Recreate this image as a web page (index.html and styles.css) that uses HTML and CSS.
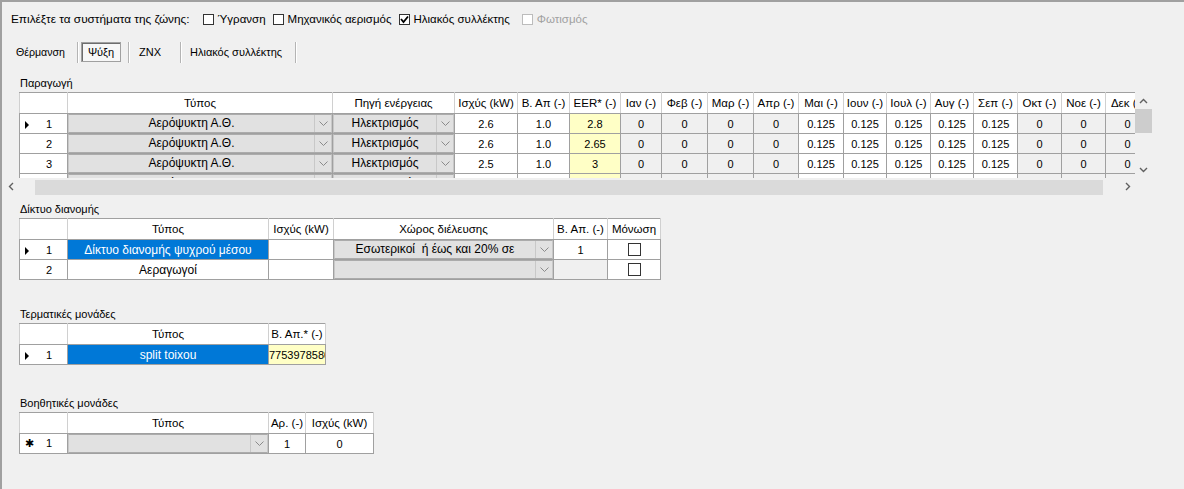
FILE: index.html
```html
<!DOCTYPE html>
<html lang="el">
<head>
    <meta charset="UTF-8">
    <title>Συστήματα ζώνης</title>
    <link rel="stylesheet" href="styles.css">
</head>
<body>
<div class="window">

    <!-- system selection -->
    <div class="systems">
        <span class="prompt">Επιλέξτε τα συστήματα της ζώνης:</span>
        <span class="check"><span class="box"></span>Ύγρανση</span>
        <span class="check"><span class="box"></span>Μηχανικός αερισμός</span>
        <span class="check"><span class="box checked"><svg width="9" height="9" viewBox="0 0 9 9"><polyline points="1,4 3.5,7 8,1.5" fill="none" stroke="#000" stroke-width="1.8"/></svg></span>Ηλιακός συλλέκτης</span>
        <span class="check disabled"><span class="box"></span>Φωτισμός</span>
    </div>

    <!-- tool strip -->
    <div class="tabs">
        <span class="tab tab-heat">Θέρμανση</span>
        <span class="sep"></span>
        <span class="tab tab-cool active">Ψύξη</span>
        <span class="sep"></span>
        <span class="tab tab-znx">ZNX</span>
        <span class="sep"></span>
        <span class="tab tab-solar">Ηλιακός συλλέκτης</span>
        <span class="sep"></span>
    </div>

    <!-- Παραγωγή -->
    <div class="caption cap-prod">Παραγωγή</div>
    <div class="scroll-grid">
        <div class="viewport">
            <table class="grid prod">
                <colgroup>
                    <col><col><col><col><col><col><col><col><col><col><col><col><col><col><col><col><col><col>
                </colgroup>
                <tr class="head">
                    <th></th><th>Τύπος</th><th>Πηγή ενέργειας</th><th>Ισχύς (kW)</th><th>Β. Απ (-)</th><th>EER* (-)</th>
                    <th>Ιαν (-)</th><th>Φεβ (-)</th><th>Μαρ (-)</th><th>Απρ (-)</th><th>Μαι (-)</th><th>Ιουν (-)</th>
                    <th>Ιουλ (-)</th><th>Αυγ (-)</th><th>Σεπ (-)</th><th>Οκτ (-)</th><th>Νοε (-)</th><th>Δεκ (-)</th>
                </tr>
                <tr>
                    <td class="rh"><span class="mark"><span class="current"></span></span>1</td>
                    <td class="combo"><div class="combo-box"><span class="combo-text">Αερόψυκτη Α.Θ.</span><span class="combo-btn"><svg width="9" height="5" viewBox="0 0 9 5"><polyline points="0.5,0.5 4.5,4.5 8.5,0.5" fill="none" stroke="#8a8a8a"/></svg></span></div></td>
                    <td class="combo"><div class="combo-box"><span class="combo-text">Ηλεκτρισμός</span><span class="combo-btn"><svg width="9" height="5" viewBox="0 0 9 5"><polyline points="0.5,0.5 4.5,4.5 8.5,0.5" fill="none" stroke="#8a8a8a"/></svg></span></div></td>
                    <td>2.6</td><td>1.0</td><td class="yellow">2.8</td>
                    <td class="off">0</td><td class="off">0</td><td class="off">0</td><td class="off">0</td>
                    <td>0.125</td><td>0.125</td><td>0.125</td><td>0.125</td><td>0.125</td>
                    <td class="off">0</td><td class="off">0</td><td class="off">0</td>
                </tr>
                <tr>
                    <td class="rh"><span class="mark"></span>2</td>
                    <td class="combo"><div class="combo-box"><span class="combo-text">Αερόψυκτη Α.Θ.</span><span class="combo-btn"><svg width="9" height="5" viewBox="0 0 9 5"><polyline points="0.5,0.5 4.5,4.5 8.5,0.5" fill="none" stroke="#8a8a8a"/></svg></span></div></td>
                    <td class="combo"><div class="combo-box"><span class="combo-text">Ηλεκτρισμός</span><span class="combo-btn"><svg width="9" height="5" viewBox="0 0 9 5"><polyline points="0.5,0.5 4.5,4.5 8.5,0.5" fill="none" stroke="#8a8a8a"/></svg></span></div></td>
                    <td>2.6</td><td>1.0</td><td class="yellow">2.65</td>
                    <td class="off">0</td><td class="off">0</td><td class="off">0</td><td class="off">0</td>
                    <td>0.125</td><td>0.125</td><td>0.125</td><td>0.125</td><td>0.125</td>
                    <td class="off">0</td><td class="off">0</td><td class="off">0</td>
                </tr>
                <tr>
                    <td class="rh"><span class="mark"></span>3</td>
                    <td class="combo"><div class="combo-box"><span class="combo-text">Αερόψυκτη Α.Θ.</span><span class="combo-btn"><svg width="9" height="5" viewBox="0 0 9 5"><polyline points="0.5,0.5 4.5,4.5 8.5,0.5" fill="none" stroke="#8a8a8a"/></svg></span></div></td>
                    <td class="combo"><div class="combo-box"><span class="combo-text">Ηλεκτρισμός</span><span class="combo-btn"><svg width="9" height="5" viewBox="0 0 9 5"><polyline points="0.5,0.5 4.5,4.5 8.5,0.5" fill="none" stroke="#8a8a8a"/></svg></span></div></td>
                    <td>2.5</td><td>1.0</td><td class="yellow">3</td>
                    <td class="off">0</td><td class="off">0</td><td class="off">0</td><td class="off">0</td>
                    <td>0.125</td><td>0.125</td><td>0.125</td><td>0.125</td><td>0.125</td>
                    <td class="off">0</td><td class="off">0</td><td class="off">0</td>
                </tr>
                <tr>
                    <td class="rh"><span class="mark"></span>4</td>
                    <td class="combo"><div class="combo-box"><span class="combo-text">Αερόψυκτη Α.Θ.</span><span class="combo-btn"><svg width="9" height="5" viewBox="0 0 9 5"><polyline points="0.5,0.5 4.5,4.5 8.5,0.5" fill="none" stroke="#8a8a8a"/></svg></span></div></td>
                    <td class="combo"><div class="combo-box"><span class="combo-text">Ηλεκτρισμός</span><span class="combo-btn"><svg width="9" height="5" viewBox="0 0 9 5"><polyline points="0.5,0.5 4.5,4.5 8.5,0.5" fill="none" stroke="#8a8a8a"/></svg></span></div></td>
                    <td>2.5</td><td>1.0</td><td class="yellow">3</td>
                    <td class="off">0</td><td class="off">0</td><td class="off">0</td><td class="off">0</td>
                    <td>0.125</td><td>0.125</td><td>0.125</td><td>0.125</td><td>0.125</td>
                    <td class="off">0</td><td class="off">0</td><td class="off">0</td>
                </tr>
            </table>
        </div>
        <div class="vscroll">
            <span class="arrow"><svg width="9" height="6" viewBox="0 0 9 6"><polyline points="1,5 4.5,1.5 8,5" fill="none" stroke="#606060" stroke-width="1.4"/></svg></span>
            <span class="vthumb"></span>
            <span class="vtrack"></span>
            <span class="arrow"><svg width="9" height="6" viewBox="0 0 9 6"><polyline points="1,1 4.5,4.5 8,1" fill="none" stroke="#606060" stroke-width="1.4"/></svg></span>
        </div>
    </div>
    <div class="hscroll">
        <span class="arrow"><svg width="6" height="9" viewBox="0 0 6 9"><polyline points="5,1 1.5,4.5 5,8" fill="none" stroke="#606060" stroke-width="1.4"/></svg></span>
        <span class="hthumb"></span>
        <span class="arrow"><svg width="6" height="9" viewBox="0 0 6 9"><polyline points="1,1 4.5,4.5 1,8" fill="none" stroke="#606060" stroke-width="1.4"/></svg></span>
    </div>

    <!-- Δίκτυο διανομής -->
    <div class="caption cap-dist">Δίκτυο διανομής</div>
    <table class="grid dist">
        <colgroup><col><col><col><col><col><col></colgroup>
        <tr class="head">
            <th></th><th>Τύπος</th><th>Ισχύς (kW)</th><th>Χώρος διέλευσης</th><th>Β. Απ. (-)</th><th>Μόνωση</th>
        </tr>
        <tr>
            <td class="rh"><span class="mark"><span class="current"></span></span>1</td>
            <td class="selected">Δίκτυο διανομής ψυχρού μέσου</td>
            <td></td>
            <td class="combo"><div class="combo-box"><span class="combo-text">Εσωτερικοί &nbsp;ή έως και 20% σε</span><span class="combo-btn"><svg width="9" height="5" viewBox="0 0 9 5"><polyline points="0.5,0.5 4.5,4.5 8.5,0.5" fill="none" stroke="#8a8a8a"/></svg></span></div></td>
            <td>1</td>
            <td><span class="cell-check"></span></td>
        </tr>
        <tr>
            <td class="rh"><span class="mark"></span>2</td>
            <td class="text">Αεραγωγοί</td>
            <td></td>
            <td class="combo"><div class="combo-box"><span class="combo-text"></span><span class="combo-btn"><svg width="9" height="5" viewBox="0 0 9 5"><polyline points="0.5,0.5 4.5,4.5 8.5,0.5" fill="none" stroke="#8a8a8a"/></svg></span></div></td>
            <td class="off"></td>
            <td><span class="cell-check"></span></td>
        </tr>
    </table>

    <!-- Τερματικές μονάδες -->
    <div class="caption cap-term">Τερματικές μονάδες</div>
    <table class="grid term">
        <colgroup><col><col><col></colgroup>
        <tr class="head">
            <th></th><th>Τύπος</th><th>Β. Απ.* (-)</th>
        </tr>
        <tr>
            <td class="rh"><span class="mark"><span class="current"></span></span>1</td>
            <td class="selected">split toixou</td>
            <td class="yellow overflow">77539785803</td>
        </tr>
    </table>

    <!-- Βοηθητικές μονάδες -->
    <div class="caption cap-aux">Βοηθητικές μονάδες</div>
    <table class="grid aux">
        <colgroup><col><col><col><col></colgroup>
        <tr class="head">
            <th></th><th>Τύπος</th><th>Αρ. (-)</th><th>Ισχύς (kW)</th>
        </tr>
        <tr>
            <td class="rh"><span class="mark star">&#10033;</span>1</td>
            <td class="combo"><div class="combo-box"><span class="combo-text"></span><span class="combo-btn"><svg width="9" height="5" viewBox="0 0 9 5"><polyline points="0.5,0.5 4.5,4.5 8.5,0.5" fill="none" stroke="#8a8a8a"/></svg></span></div></td>
            <td>1</td>
            <td>0</td>
        </tr>
    </table>

</div>
</body>
</html>
```

FILE: styles.css
```css
html, body {
    margin: 0;
    padding: 0;
}
body {
    background-color: #f0f0f0;
    color: #000;
    font-family: "Liberation Sans", Arial, sans-serif;
    font-size: 11px;
}
.window {
    height: 487px;
    border-top: 2px solid #a0a0a0;
    border-left: 2px solid #a0a0a0;
    overflow: hidden;
}

/* top row with checkboxes */
.systems {
    display: flex;
    align-items: center;
    height: 20px;
    margin-top: 7px;
    padding-left: 9px;
    font-size: 11.5px;
}
.prompt {
    font-size: 11.8px;
    margin-right: 13px;
}
.check {
    display: inline-flex;
    align-items: center;
    margin-right: 7px;
}
.check .box {
    display: inline-flex;
    align-items: center;
    justify-content: center;
    box-sizing: border-box;
    width: 11px;
    height: 11px;
    border: 1px solid #333;
    background: #fff;
    margin-right: 4px;
}
.check.disabled {
    color: #a0a0a0;
    margin-left: 5px;
}
.check.disabled .box {
    border-color: #bcbcbc;
}

/* tool strip */
.tabs {
    display: flex;
    align-items: center;
    height: 22px;
    margin-top: 12px;
    padding-left: 3px;
}
.tab {
    box-sizing: border-box;
    white-space: nowrap;
}
.tab-heat  { width: 69px; padding-left: 11px; font-size: 10.6px; }
.tab-znx   { width: 45px; padding-left: 7px; }
.tab-solar { width: 108px; padding-left: 6px; }
.tab.active {
    width: 40px;
    height: 20px;
    line-height: 18px;
    text-align: center;
    margin-right: 4px;
    border: 1px solid #a0a0a0;
    box-shadow: inset 1px 1px 0 #6d6d6d;
    background: #f7f7f7;
}
.sep {
    width: 1px;
    height: 21px;
    background: #b4b4b4;
    border-right: 1px solid #fff;
    margin: 0 2px 0 3px;
}

/* captions above the grids */
.caption {
    height: 14px;
    line-height: 14px;
    padding-left: 18px;
    margin-bottom: 2px;
}
.cap-prod { margin-top: 13px; }
.cap-dist { margin-top: 7px; }
.cap-term { margin-top: 27px; }
.cap-aux  { margin-top: 31px; }

/* data grids */
.grid {
    border-collapse: collapse;
    table-layout: fixed;
    margin-left: 17px;
    background: #fff;
}
.grid th, .grid td {
    border: 1px solid #a0a0a0;
    padding: 0;
    font-weight: normal;
    text-align: center;
    white-space: nowrap;
    overflow: hidden;
}
.grid th {
    font-size: 11.5px;
    border-color: #d0d0d0;
    border-top-color: #a0a0a0;
    border-bottom-color: #a0a0a0;
}
.grid tr {
    height: 20px;
}
.grid tr.head {
    height: 21px;
}
.grid td.rh {
    text-align: left;
    padding-left: 5px;
}
.mark {
    display: inline-block;
    width: 21px;
    vertical-align: middle;
}
.current {
    display: block;
    width: 0;
    height: 0;
    border-left: 4px solid #000;
    border-top: 4px solid transparent;
    border-bottom: 4px solid transparent;
}
.mark.star {
    font-size: 11px;
    vertical-align: 0;
}
.grid td.off {
    background: #f0f0f0;
}
.grid td.yellow {
    background: #ffffc6;
}
.grid td.selected {
    background: #0078d7;
    color: #fff;
    font-size: 12px;
}
.grid td.text {
    font-size: 12px;
}
.grid td.overflow {
    text-align: left;
    text-overflow: clip;
    font-size: 11px;
}
.grid td.combo {
    background: #e1e1e1;
    padding: 0;
}
.combo-box {
    display: flex;
    height: 17px;
    border: 1px solid #c8c8c8;
    border-top: 1px solid #ababab;
    border-bottom: 1px solid #ababab;
}
.combo-text {
    flex: 1;
    line-height: 17px;
    font-size: 12px;
    overflow: hidden;
}
.combo-btn {
    display: flex;
    align-items: center;
    justify-content: center;
    width: 16px;
    border-left: 1px solid #c8c8c8;
}
.cell-check {
    display: inline-block;
    box-sizing: border-box;
    width: 13px;
    height: 13px;
    border: 1px solid #333;
    background: #fff;
    vertical-align: middle;
}

/* column widths */
.prod col:nth-child(1) { width: 48px; }
.prod col:nth-child(2) { width: 265px; }
.prod col:nth-child(3) { width: 122px; }
.prod col:nth-child(4) { width: 63px; }
.prod col:nth-child(5) { width: 52px; }
.prod col:nth-child(6) { width: 51px; }
.prod col:nth-child(7) { width: 41px; }
.prod col:nth-child(8),
.prod col:nth-child(9) { width: 46px; }
.prod col:nth-child(10),
.prod col:nth-child(11) { width: 45px; }
.prod col:nth-child(12),
.prod col:nth-child(14) { width: 43px; }
.prod col:nth-child(13),
.prod col:nth-child(15),
.prod col:nth-child(16),
.prod col:nth-child(17),
.prod col:nth-child(18) { width: 44px; }
.prod { width: 1130px; }

.dist col:nth-child(1) { width: 48px; }
.dist col:nth-child(2) { width: 201px; }
.dist col:nth-child(3) { width: 65px; }
.dist col:nth-child(4) { width: 220px; }
.dist col:nth-child(5) { width: 54px; }
.dist col:nth-child(6) { width: 53px; }
.dist { width: 641px; }

.term col:nth-child(1) { width: 48px; }
.term col:nth-child(2) { width: 201px; }
.term col:nth-child(3) { width: 57px; }
.term { width: 306px; }

.aux col:nth-child(1) { width: 48px; }
.aux col:nth-child(2) { width: 201px; }
.aux col:nth-child(3) { width: 37px; }
.aux col:nth-child(4) { width: 68px; }
.aux { width: 354px; }

/* scrolling grid */
.scroll-grid {
    display: flex;
    height: 86px;
}
.viewport {
    width: 1133px;
    height: 86px;
    overflow: hidden;
}
.vscroll {
    display: flex;
    flex-direction: column;
    width: 17px;
    background: #f0f0f0;
}
.vscroll .arrow {
    display: flex;
    align-items: center;
    justify-content: center;
    height: 17px;
}
.vthumb {
    height: 24px;
    background: #cdcdcd;
}
.vtrack {
    flex: 1;
}
.hscroll {
    display: flex;
    width: 1150px;
    height: 17px;
}
.hscroll .arrow {
    display: flex;
    align-items: center;
    justify-content: center;
    width: 17px;
}
.hthumb {
    width: 1068px;
    margin: 2px 16px 0 16px;
    background: #dadada;
}
```
